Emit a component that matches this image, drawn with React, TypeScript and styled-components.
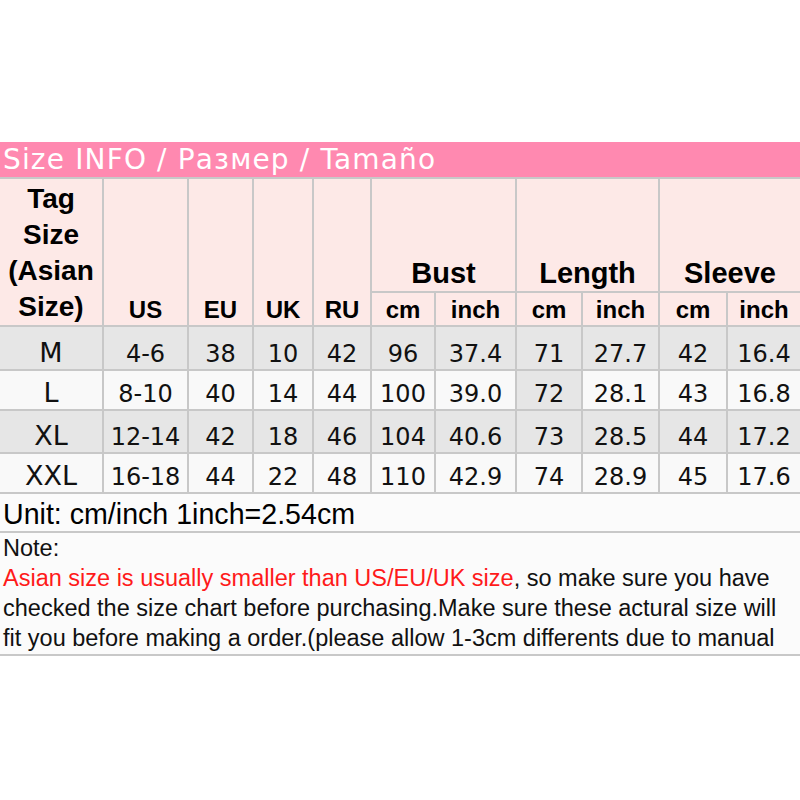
import React from "react";
import styled, { createGlobalStyle } from "styled-components";

const GlobalStyle = createGlobalStyle`
  html, body {
    margin: 0;
    padding: 0;
    background: #ffffff;
  }
  body {
    font-family: "Liberation Sans", Arial, sans-serif;
  }
`;

const COLS = [102, 83, 63, 58, 56, 62, 79, 64, 75, 66, 72];

const LINE = "#c8c8c8";
const HEAD_BG = "#fde9e7";
const GRAY = "#e6e6e6";
const WHITE = "#f9f9f9";

const Page = styled.div`
  width: 800px;
  height: 800px;
  padding-top: 142px;
  box-sizing: border-box;
  overflow: hidden;
`;

const Chart = styled.div`
  display: flex;
  flex-direction: column;
  gap: 2px;
  background: ${LINE};
  padding-bottom: 2px;
`;

const TitleBar = styled.div`
  height: 35px;
  background: #ff89b0;
  color: #ffffff;
  font-family: "DejaVu Sans", Verdana, sans-serif;
  font-size: 28px;
  letter-spacing: 1.15px;
  line-height: 35px;
  padding-left: 3px;
  white-space: nowrap;
`;

const SizeGrid = styled.div`
  display: grid;
  grid-template-columns: ${COLS.map((c) => `${c}px`).join(" ")};
  grid-template-rows: 112px 32px 42px 38px 41px 38px;
  gap: 2px;
  background: ${LINE};
`;

const HeadCell = styled.div<{ $cols?: number; $rows?: number; $size?: number }>`
  grid-column: span ${(p) => p.$cols ?? 1};
  grid-row: span ${(p) => p.$rows ?? 1};
  background: ${HEAD_BG};
  color: #000;
  font-weight: bold;
  font-size: ${(p) => p.$size ?? 24}px;
  line-height: 1.2;
  display: flex;
  align-items: flex-end;
  justify-content: center;
  text-align: center;
  white-space: nowrap;
`;

const TagHead = styled(HeadCell)`
  line-height: 36px;
  white-space: normal;
`;

const DataCell = styled.div<{ $shade: boolean; $tag?: boolean }>`
  background: ${(p) => (p.$shade ? GRAY : WHITE)};
  color: #111;
  font-family: "DejaVu Sans", Verdana, sans-serif;
  font-size: ${(p) => (p.$tag ? 27 : 24)}px;
  line-height: 1.2;
  display: flex;
  align-items: flex-end;
  justify-content: center;
  white-space: nowrap;
`;

const UnitRow = styled.div`
  height: 37px;
  background: #fbfbfb;
  color: #000;
  font-size: 28.6px;
  line-height: 1.2;
  padding-left: 3px;
  display: flex;
  align-items: flex-end;
  white-space: nowrap;
`;

const NoteBox = styled.div`
  height: 121px;
  background: #fbfbfb;
  color: #111;
  font-size: 23.5px;
  line-height: 30px;
  padding-left: 3px;
  overflow: hidden;
  white-space: nowrap;
`;

const Red = styled.span`
  color: #ff1a1a;
`;

type Row = { tag: string; vals: string[]; shade: boolean; gray?: number[] };

const rows: Row[] = [
  { tag: "M", vals: ["4-6", "38", "10", "42", "96", "37.4", "71", "27.7", "42", "16.4"], shade: true },
  { tag: "L", vals: ["8-10", "40", "14", "44", "100", "39.0", "72", "28.1", "43", "16.8"], shade: false, gray: [6] },
  { tag: "XL", vals: ["12-14", "42", "18", "46", "104", "40.6", "73", "28.5", "44", "17.2"], shade: true },
  { tag: "XXL", vals: ["16-18", "44", "22", "48", "110", "42.9", "74", "28.9", "45", "17.6"], shade: false },
];

export default function App() {
  return (
    <Page>
      <GlobalStyle />
      <Chart>
        <TitleBar>Size INFO / Размер / Tamaño</TitleBar>
        <SizeGrid>
          <TagHead $rows={2} $size={28}>
            <div>
              Tag
              <br />
              Size
              <br />
              (Asian
              <br />
              Size)
            </div>
          </TagHead>
          <HeadCell $rows={2}>US</HeadCell>
          <HeadCell $rows={2}>EU</HeadCell>
          <HeadCell $rows={2}>UK</HeadCell>
          <HeadCell $rows={2}>RU</HeadCell>
          <HeadCell $cols={2} $size={29}>Bust</HeadCell>
          <HeadCell $cols={2} $size={29}>Length</HeadCell>
          <HeadCell $cols={2} $size={29}>Sleeve</HeadCell>
          {["cm", "inch", "cm", "inch", "cm", "inch"].map((u, i) => (
            <HeadCell key={i}>{u}</HeadCell>
          ))}
          {rows.map((r) => (
            <React.Fragment key={r.tag}>
              <DataCell $shade={r.shade} $tag>
                {r.tag}
              </DataCell>
              {r.vals.map((v, i) => (
                <DataCell key={i} $shade={r.shade || !!r.gray?.includes(i)}>
                  {v}
                </DataCell>
              ))}
            </React.Fragment>
          ))}
        </SizeGrid>
        <UnitRow>Unit: cm/inch 1inch=2.54cm</UnitRow>
        <NoteBox>
          Note:
          <br />
          <Red>Asian size is usually smaller than US/EU/UK size</Red>, so make sure you have
          <br />
          checked the size chart before purchasing.Make sure these actural size will
          <br />
          fit you before making a order.(please allow 1-3cm differents due to manual
        </NoteBox>
      </Chart>
    </Page>
  );
}
